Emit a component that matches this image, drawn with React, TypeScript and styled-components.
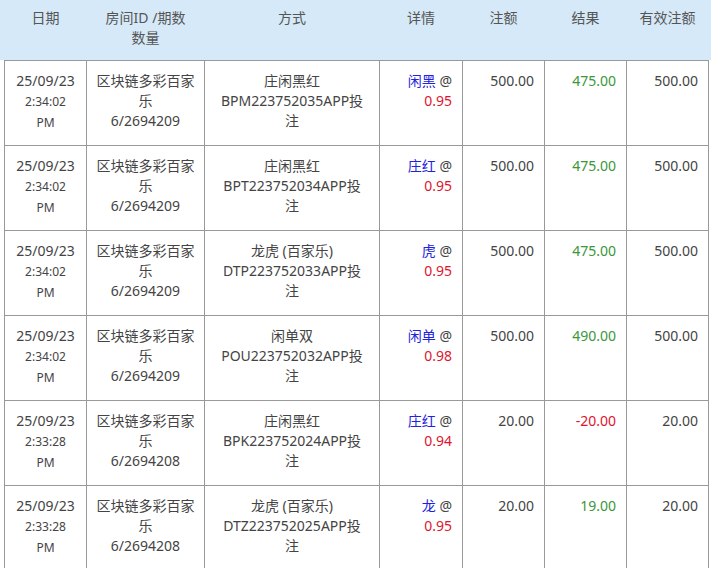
import styled, { createGlobalStyle } from "styled-components";

const GlobalStyle = createGlobalStyle`
	html, body {
		margin: 0;
		padding: 0;
		background: #fff;
		overflow: hidden;
	}
	body {
		font-family: "Noto Sans", "Noto Sans CJK SC", sans-serif;
		color: #444;
	}
`;

const Wrapper = styled.div`
	width: 711px;
	height: 568px;
	overflow: hidden;
	padding-left: 4px;
	box-sizing: border-box;
	background: linear-gradient(#d6e9f8 0, #d6e9f8 60px, #fff 60px);
`;

const Table = styled.table`
	border-collapse: collapse;
	table-layout: fixed;
	width: 704px;
	font-size: 14px;
	line-height: 20px;
`;

const HeadCell = styled.th<{ $w: number }>`
	width: ${(p) => p.$w}px;
	height: 60px;
	box-sizing: border-box;
	padding: 8px 10px 0;
	vertical-align: top;
	font-weight: normal;
	color: #555;
	text-align: center;
`;

const NoWrap = styled.span`
	white-space: nowrap;
`;

const Cell = styled.td<{ $align?: string; $pad?: string }>`
	height: 85px;
	box-sizing: border-box;
	padding: ${(p) => p.$pad || "10px 10px 0"};
	vertical-align: top;
	border: 1px solid #999;
	text-align: ${(p) => p.$align || "center"};
	color: #444;
`;

const Small = styled.span`
	font-size: 12px;
`;

const Pick = styled.span`
	color: #2222dd;
`;

const Odds = styled.span`
	color: #e0142e;
`;

const Result = styled.span<{ $neg: boolean }>`
	color: ${(p) => (p.$neg ? "#e0142e" : "#3a973a")};
`;

type Bet = {
	date: string;
	time: string;
	issue: string;
	game: string;
	code: string;
	pick: string;
	odds: string;
	amount: string;
	result: string;
	valid: string;
};

const bets: Bet[] = [
	{ date: "25/09/23", time: "2:34:02", issue: "6/2694209", game: "庄闲黑红", code: "BPM223752035", pick: "闲黑", odds: "0.95", amount: "500.00", result: "475.00", valid: "500.00" },
	{ date: "25/09/23", time: "2:34:02", issue: "6/2694209", game: "庄闲黑红", code: "BPT223752034", pick: "庄红", odds: "0.95", amount: "500.00", result: "475.00", valid: "500.00" },
	{ date: "25/09/23", time: "2:34:02", issue: "6/2694209", game: "龙虎 (百家乐)", code: "DTP223752033", pick: "虎", odds: "0.95", amount: "500.00", result: "475.00", valid: "500.00" },
	{ date: "25/09/23", time: "2:34:02", issue: "6/2694209", game: "闲单双", code: "POU223752032", pick: "闲单", odds: "0.98", amount: "500.00", result: "490.00", valid: "500.00" },
	{ date: "25/09/23", time: "2:33:28", issue: "6/2694208", game: "庄闲黑红", code: "BPK223752024", pick: "庄红", odds: "0.94", amount: "20.00", result: "-20.00", valid: "20.00" },
	{ date: "25/09/23", time: "2:33:28", issue: "6/2694208", game: "龙虎 (百家乐)", code: "DTZ223752025", pick: "龙", odds: "0.95", amount: "20.00", result: "19.00", valid: "20.00" },
];

const App = () => (
	<>
		<GlobalStyle />
		<Wrapper>
			<Table>
				<thead>
					<tr>
						<HeadCell $w={82}>日期</HeadCell>
						<HeadCell $w={118}>
							<NoWrap>房间ID /期数</NoWrap> <NoWrap>数量</NoWrap>
						</HeadCell>
						<HeadCell $w={175}>方式</HeadCell>
						<HeadCell $w={83}>详情</HeadCell>
						<HeadCell $w={82}>注额</HeadCell>
						<HeadCell $w={82}>结果</HeadCell>
						<HeadCell $w={82}>有效注额</HeadCell>
					</tr>
				</thead>
				<tbody>
					{bets.map((b, i) => (
						<tr key={i}>
							<Cell>
								{b.date}
								<br />
								<Small>{b.time}</Small>
								<br />
								<Small>PM</Small>
							</Cell>
							<Cell $pad="10px 6px 0">
								区块链多彩百家乐
								<br />
								{b.issue}
							</Cell>
							<Cell $pad="10px 14px 0">
								{b.game}
								<br />
								{b.code}APP投注
							</Cell>
							<Cell $align="right" $pad="10px 10px 0 16px">
								<Pick>{b.pick}</Pick> @ <Odds>{b.odds}</Odds>
							</Cell>
							<Cell $align="right">{b.amount}</Cell>
							<Cell $align="right">
								<Result $neg={b.result.startsWith("-")}>{b.result}</Result>
							</Cell>
							<Cell $align="right">{b.valid}</Cell>
						</tr>
					))}
				</tbody>
			</Table>
		</Wrapper>
	</>
);

export default App;
